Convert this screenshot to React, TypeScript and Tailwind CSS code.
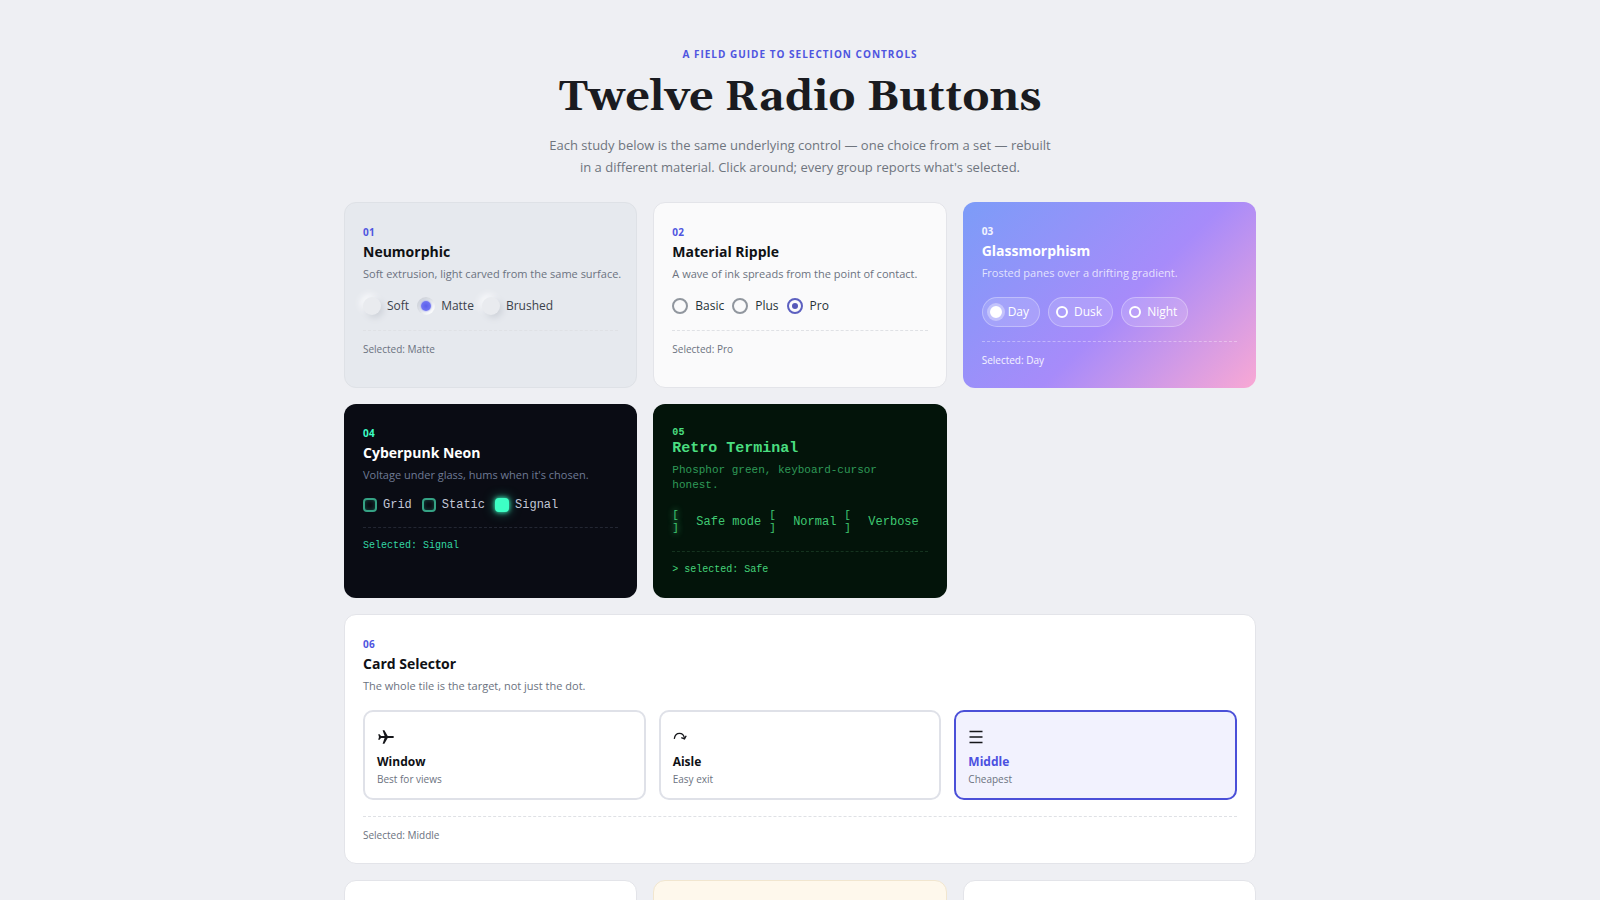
import { useState } from "react";
import type { ReactNode } from "react";
import clsx from "clsx";

const SANS = "font-['Open_Sans','Noto_Sans',sans-serif]";
const MONO = "font-['Liberation_Mono',monospace]";

type GroupProps = {
  name: string;
  options: string[];
  value: string;
  onChange: (value: string) => void;
  className: string;
  itemClass: string;
  render: (option: string, checked: boolean) => ReactNode;
};

function RadioGroup({ name, options, value, onChange, className, itemClass, render }: GroupProps) {
  return (
    <div role="radiogroup" aria-label={name} className={className}>
      {options.map((option) => (
        <label key={option} className={clsx("relative cursor-pointer", itemClass)}>
          <input
            type="radio"
            name={name}
            value={option}
            checked={value === option}
            onChange={() => onChange(option)}
            className="sr-only"
          />
          {render(option, value === option)}
        </label>
      ))}
    </div>
  );
}

type CardProps = {
  className: string;
  number: string;
  numberClass?: string;
  title: string;
  titleClass?: string;
  text: string;
  textClass?: string;
  status: string;
  statusClass?: string;
  children: ReactNode;
};

function Card(p: CardProps) {
  return (
    <section className={clsx("rounded-xl pt-[21px] pb-5", p.className)}>
      <p className={clsx("text-[10px] leading-4 font-bold tracking-wide", p.numberClass ?? "text-[#4f55e0]")}>{p.number}</p>
      <h2 className={clsx("font-bold", p.titleClass ?? "text-[14px] leading-6 text-[#0f1115]")}>{p.title}</h2>
      <p className={clsx("text-[11px]", p.textClass ?? "leading-5 whitespace-nowrap text-[#6b7280]")}>{p.text}</p>
      {p.children}
      <p className={clsx("border-t border-dashed text-[10px] leading-4", p.statusClass ?? "mt-3.5 border-[#dfe1e5] pt-2.5 text-[#6b7280]")}>
        {p.status}
      </p>
    </section>
  );
}

function PlaneIcon() {
  return (
    <svg width="18" height="16" viewBox="0 0 18 16" fill="currentColor" aria-hidden="true">
      <path d="M17 8c0 .6-.8 1-2 1h-4.300L7.400 14.800H5.600L7.600 9H4L2.600 10.800H1.200L2 8 1.200 5.200h1.400L4 7h3.600L5.600 1.200h1.800L10.700 7H15c1.200 0 2 .4 2 1Z" />
    </svg>
  );
}

function ArcArrowIcon() {
  return (
    <svg width="16" height="16" viewBox="0 0 16 16" fill="none" stroke="currentColor" strokeWidth="1.3" aria-hidden="true">
      <path d="M1.300 9.800C1.800 6.300 4 4.400 6.500 4.400c2.500 0 4.300 1.600 4.900 4.600" />
      <path d="M8.300 8.600l3.200 1.300 1.700-3.200" />
    </svg>
  );
}

function BarsIcon() {
  return (
    <svg width="16" height="16" viewBox="0 0 16 16" stroke="currentColor" strokeWidth="1.500" aria-hidden="true">
      <path d="M1.500 2.500h13M1.500 8h13M1.500 13.500h13" />
    </svg>
  );
}

const seats = [
  { name: "Window", note: "Best for views", icon: <PlaneIcon /> },
  { name: "Aisle", note: "Easy exit", icon: <ArcArrowIcon /> },
  { name: "Middle", note: "Cheapest", icon: <BarsIcon /> },
];

export default function App() {
  const [finish, setFinish] = useState("Matte");
  const [plan, setPlan] = useState("Pro");
  const [time, setTime] = useState("Day");
  const [channel, setChannel] = useState("Signal");
  const [mode, setMode] = useState("Safe mode");
  const [seat, setSeat] = useState("Middle");

  return (
    <main className={clsx("min-h-screen bg-[#eeeff3] px-6 pt-11 pb-12 text-[#0f1115]", SANS)}>
      <header className="mx-auto max-w-[508px] text-center">
        <p className="text-[10px] leading-5 font-bold tracking-widest text-[#4f55e0] uppercase">
          A field guide to selection controls
        </p>
        <h1 className="mt-1.5 font-[Georgia,Gelasio,'Liberation_Serif',serif] text-[43px] leading-14 font-bold whitespace-nowrap text-[#1a1b20]">
          Twelve Radio Buttons
        </h1>
        <p className="mt-2 text-[13px] leading-[22px] text-[#6f757e]">
          Each study below is the same underlying control — one choice from a set — rebuilt in a different material. Click around; every group reports what's selected.
        </p>
      </header>

      <div className="mx-auto mt-6 grid max-w-[912px] grid-cols-3 gap-4">
        <Card
          className="border border-[#dee1e6] bg-[#e6e9ee] px-[18px]"
          number="01"
          title="Neumorphic"
          text="Soft extrusion, light carved from the same surface."
          status={`Selected: ${finish}`}
        >
          <RadioGroup
            name="Finish"
            options={["Soft", "Matte", "Brushed"]}
            value={finish}
            onChange={setFinish}
            className="mt-3 flex gap-2"
            itemClass="flex items-center gap-1.5 text-[12px] leading-5 text-[#3b414b]"
            render={(option, checked) => (
              <>
                <span
                  className={clsx(
                    "flex size-[18px] items-center justify-center rounded-full",
                    checked
                      ? "bg-[#e6e9ee] shadow-[inset_2px_2px_4px_#cdd1d9,inset_-2px_-2px_4px_#ffffff]"
                      : "bg-[#e9ebef] shadow-[3px_3px_6px_#cfd3da,-3px_-3px_6px_#f8f9fb]",
                  )}
                >
                  {checked && <span className="size-2.5 rounded-full bg-[radial-gradient(circle,#5b5fec,#7c80f5)] shadow-[0_0_2px_#7c80f5]" />}
                </span>
                {option}
              </>
            )}
          />
        </Card>

        <Card
          className="border border-[#e3e4e9] bg-[#fafafb] px-[18px]"
          number="02"
          title="Material Ripple"
          text="A wave of ink spreads from the point of contact."
          status={`Selected: ${plan}`}
        >
          <RadioGroup
            name="Plan"
            options={["Basic", "Plus", "Pro"]}
            value={plan}
            onChange={setPlan}
            className="mt-3 flex gap-2"
            itemClass="flex items-center gap-[7px] text-[12px] leading-5 text-[#263238]"
            render={(option, checked) => (
              <>
                <span
                  className={clsx(
                    "flex size-4 items-center justify-center rounded-full border-2",
                    checked ? "border-[#5c60c0]" : "border-[#90969e]",
                  )}
                >
                  {checked && <span className="size-1.5 rounded-full bg-[#5558b8]" />}
                </span>
                {option}
              </>
            )}
          />
        </Card>

        <Card
          className="bg-[linear-gradient(135deg,#7c9cf8_0%,#a78bfa_55%,#f9a8d4_100%)] px-[19px]"
          number="03"
          numberClass="text-white/90"
          title="Glassmorphism"
          titleClass="text-[14px] leading-6 text-white"
          text="Frosted panes over a drifting gradient."
          textClass="leading-5 text-white/75"
          status={`Selected: ${time}`}
          statusClass="mt-3.5 border-white/35 pt-2.5 text-white/90"
        >
          <RadioGroup
            name="Time"
            options={["Day", "Dusk", "Night"]}
            value={time}
            onChange={setTime}
            className="mt-3.5 flex gap-2"
            itemClass="flex items-center gap-1.5 rounded-full border border-white/30 bg-white/15 py-1 pr-2.5 pl-[7px] text-[12px] leading-5 text-white"
            render={(option, checked) => (
              <>
                <span
                  className={clsx(
                    "size-3 rounded-full border-2 border-white",
                    checked && "bg-white shadow-[0_0_0_3px_rgba(255,255,255,0.35)]",
                  )}
                />
                {option}
              </>
            )}
          />
        </Card>

        <Card
          className="bg-[#0a0c14] px-[19px]"
          number="04"
          numberClass="text-[#3dffc5]"
          title="Cyberpunk Neon"
          titleClass="text-[14px] leading-6 text-white"
          text="Voltage under glass, hums when it's chosen."
          textClass="leading-5 text-[#6f7b95]"
          status={`Selected: ${channel}`}
          statusClass={clsx("mt-3 border-[#232733] pt-2.5 text-[#34d8a6]", MONO)}
        >
          <RadioGroup
            name="Channel"
            options={["Grid", "Static", "Signal"]}
            value={channel}
            onChange={setChannel}
            className="mt-2.5 flex gap-2.5"
            itemClass={clsx("flex items-center gap-1.5 text-[12px] leading-5 text-[#c3c7d6]", MONO)}
            render={(option, checked) => (
              <>
                <span
                  className={clsx(
                    "size-3.5 rounded-[4px] border-2",
                    checked
                      ? "border-[#3dffc5] bg-[#3dffc5] shadow-[0_0_5px_#3dffc5,0_0_12px_rgba(61,255,197,0.5)]"
                      : "border-[#35a284] shadow-[inset_0_0_4px_rgba(61,255,197,0.25)]",
                  )}
                />
                {option}
              </>
            )}
          />
        </Card>

        <Card
          className={clsx("bg-[#03140a] px-[19px]", MONO)}
          number="05"
          numberClass="text-[#4ade80]"
          title="Retro Terminal"
          titleClass="text-[15px] leading-4 text-[#4ade80]"
          text="Phosphor green, keyboard-cursor honest."
          textClass="mt-1.5 leading-[15px] text-[#2f9a58]"
          status={`> selected: ${mode.split(" ")[0]}`}
          statusClass="mt-4 border-[#15331f] pt-2.5 text-[#45d47a]"
        >
          <RadioGroup
            name="Mode"
            options={["Safe mode", "Normal", "Verbose"]}
            value={mode}
            onChange={setMode}
            className="mt-4 flex gap-2"
            itemClass="flex items-center gap-2.5 text-[12px] text-[#3fc972]"
            render={(option, checked) => (
              <>
                <span
                  aria-hidden="true"
                  className={clsx("w-3.5 text-[11px] leading-[13px]", checked && "[text-shadow:0_0_6px_#4ade80]")}
                >
                  [ ]
                </span>
                {option}
              </>
            )}
          />
        </Card>

        <Card
          className="col-span-3 border border-[#e3e4e9] bg-white px-[18px]"
          number="06"
          title="Card Selector"
          text="The whole tile is the target, not just the dot."
          status={`Selected: ${seat}`}
          statusClass="mt-4 border-[#dfe1e5] pt-2.5 text-[#6b7280]"
        >
          <RadioGroup
            name="Seat"
            options={seats.map((s) => s.name)}
            value={seat}
            onChange={setSeat}
            className="mt-3.5 grid grid-cols-3 gap-[13px]"
            itemClass="flex"
            render={(option, checked) => {
              const item = seats.find((s) => s.name === option)!;
              return (
                <span
                  className={clsx(
                    "flex grow flex-col rounded-[10px] border-2 px-3 pt-2.5 pb-3",
                    checked ? "border-[#4b50d8] bg-[#f2f2fe]" : "border-[#dfe1e8] bg-white",
                  )}
                >
                  <span className="flex h-[30px] items-center text-[#15161a]">{item.icon}</span>
                  <span className={clsx("text-[12px] leading-5 font-bold", checked && "text-[#4b50e0]")}>{item.name}</span>
                  <span className="text-[10px] leading-[14px] text-[#6b7280]">{item.note}</span>
                </span>
              );
            }}
          />
        </Card>

        <section className="h-48 rounded-xl border border-[#e3e4e9] bg-white" />
        <section className="h-48 rounded-xl border border-[#f1e6cf] bg-[#fef8ec]" />
        <section className="h-48 rounded-xl border border-[#e3e4e9] bg-white" />
      </div>
    </main>
  );
}
